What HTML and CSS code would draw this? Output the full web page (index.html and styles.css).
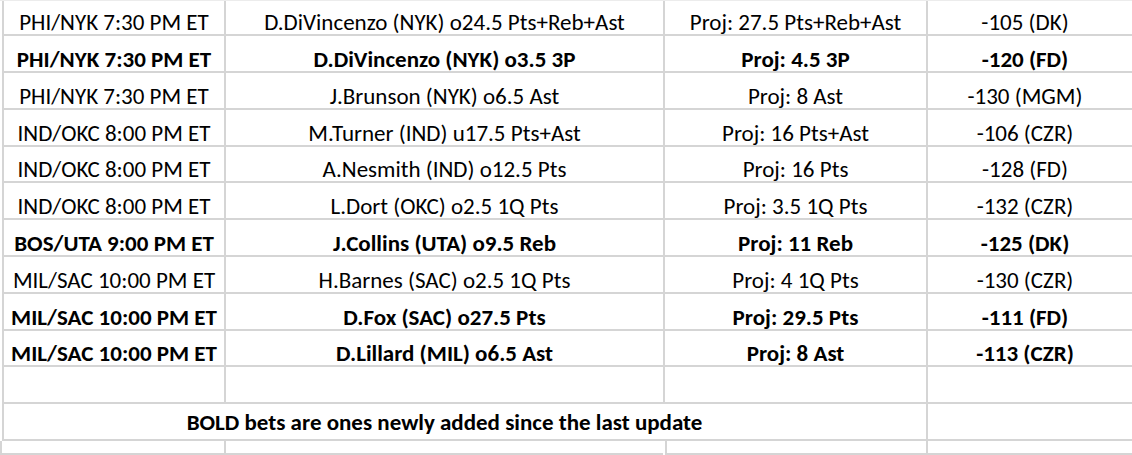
FILE: index.html
```html
<!DOCTYPE html>
<html>
<head>
<meta charset="utf-8">
<link rel="stylesheet" href="styles.css">
</head>
<body>
<div class="sheet">
  <div class="c">PHI/NYK 7:30 PM ET</div><div class="c">D.DiVincenzo (NYK) o24.5 Pts+Reb+Ast</div><div class="c">Proj: 27.5 Pts+Reb+Ast</div><div class="c">-105 (DK)</div><div class="f"></div>
  <div class="c b">PHI/NYK 7:30 PM ET</div><div class="c b">D.DiVincenzo (NYK) o3.5 3P</div><div class="c b">Proj: 4.5 3P</div><div class="c b">-120 (FD)</div><div class="f"></div>
  <div class="c">PHI/NYK 7:30 PM ET</div><div class="c">J.Brunson (NYK) o6.5 Ast</div><div class="c">Proj: 8 Ast</div><div class="c">-130 (MGM)</div><div class="f"></div>
  <div class="c">IND/OKC 8:00 PM ET</div><div class="c">M.Turner (IND) u17.5 Pts+Ast</div><div class="c">Proj: 16 Pts+Ast</div><div class="c">-106 (CZR)</div><div class="f"></div>
  <div class="c">IND/OKC 8:00 PM ET</div><div class="c">A.Nesmith (IND) o12.5 Pts</div><div class="c">Proj: 16 Pts</div><div class="c">-128 (FD)</div><div class="f"></div>
  <div class="c">IND/OKC 8:00 PM ET</div><div class="c">L.Dort (OKC) o2.5 1Q Pts</div><div class="c">Proj: 3.5 1Q Pts</div><div class="c">-132 (CZR)</div><div class="f"></div>
  <div class="c b">BOS/UTA 9:00 PM ET</div><div class="c b">J.Collins (UTA) o9.5 Reb</div><div class="c b">Proj: 11 Reb</div><div class="c b">-125 (DK)</div><div class="f"></div>
  <div class="c">MIL/SAC 10:00 PM ET</div><div class="c">H.Barnes (SAC) o2.5 1Q Pts</div><div class="c">Proj: 4 1Q Pts</div><div class="c">-130 (CZR)</div><div class="f"></div>
  <div class="c b">MIL/SAC 10:00 PM ET</div><div class="c b">D.Fox (SAC) o27.5 Pts</div><div class="c b">Proj: 29.5 Pts</div><div class="c b">-111 (FD)</div><div class="f"></div>
  <div class="c b">MIL/SAC 10:00 PM ET</div><div class="c b">D.Lillard (MIL) o6.5 Ast</div><div class="c b">Proj: 8 Ast</div><div class="c b">-113 (CZR)</div><div class="f"></div>
  <div class="c"></div><div class="c"></div><div class="c"></div><div class="c"></div><div class="f"></div>
  <div class="c b note">BOLD bets are ones newly added since the last update</div><div class="c"></div><div class="f"></div>
  <div class="c"></div><div class="c"></div><div class="c"></div><div class="c"></div><div class="f"></div>
</div>
</body>
</html>
```

FILE: styles.css
```css
html, body {
  margin: 0;
  padding: 0;
  background: #ffffff;
}
body {
  width: 1132px;
  height: 455px;
  overflow: hidden;
}
.sheet {
  display: grid;
  grid-template-columns: 224px 439px 263px 196px 1fr;
  grid-template-rows: 35px 37px 37px 37px 36px 37px 37px 37px 37px 36px 37px 37px 14px;
  border-top: 1px solid #ececec;
  font-family: Carlito, Calibri, Lato, sans-serif;
  font-size: 23px;
  color: #000000;
}
.c, .f {
  border-bottom: 2px solid #d5d5d5;
  display: flex;
  align-items: flex-end;
  justify-content: center;
  line-height: 23px;
  padding-bottom: 0;
  white-space: nowrap;
  overflow: visible;
  min-width: 0;
}
.c {
  border-left: 2px solid #d5d5d5;
}
.sheet > .c:nth-child(5n+1) {
  margin-left: 2px;
}
.b {
  font-weight: bold;
}
.note {
  grid-column: span 3;
  padding-right: 41px;
  padding-bottom: 5px;
}
```
